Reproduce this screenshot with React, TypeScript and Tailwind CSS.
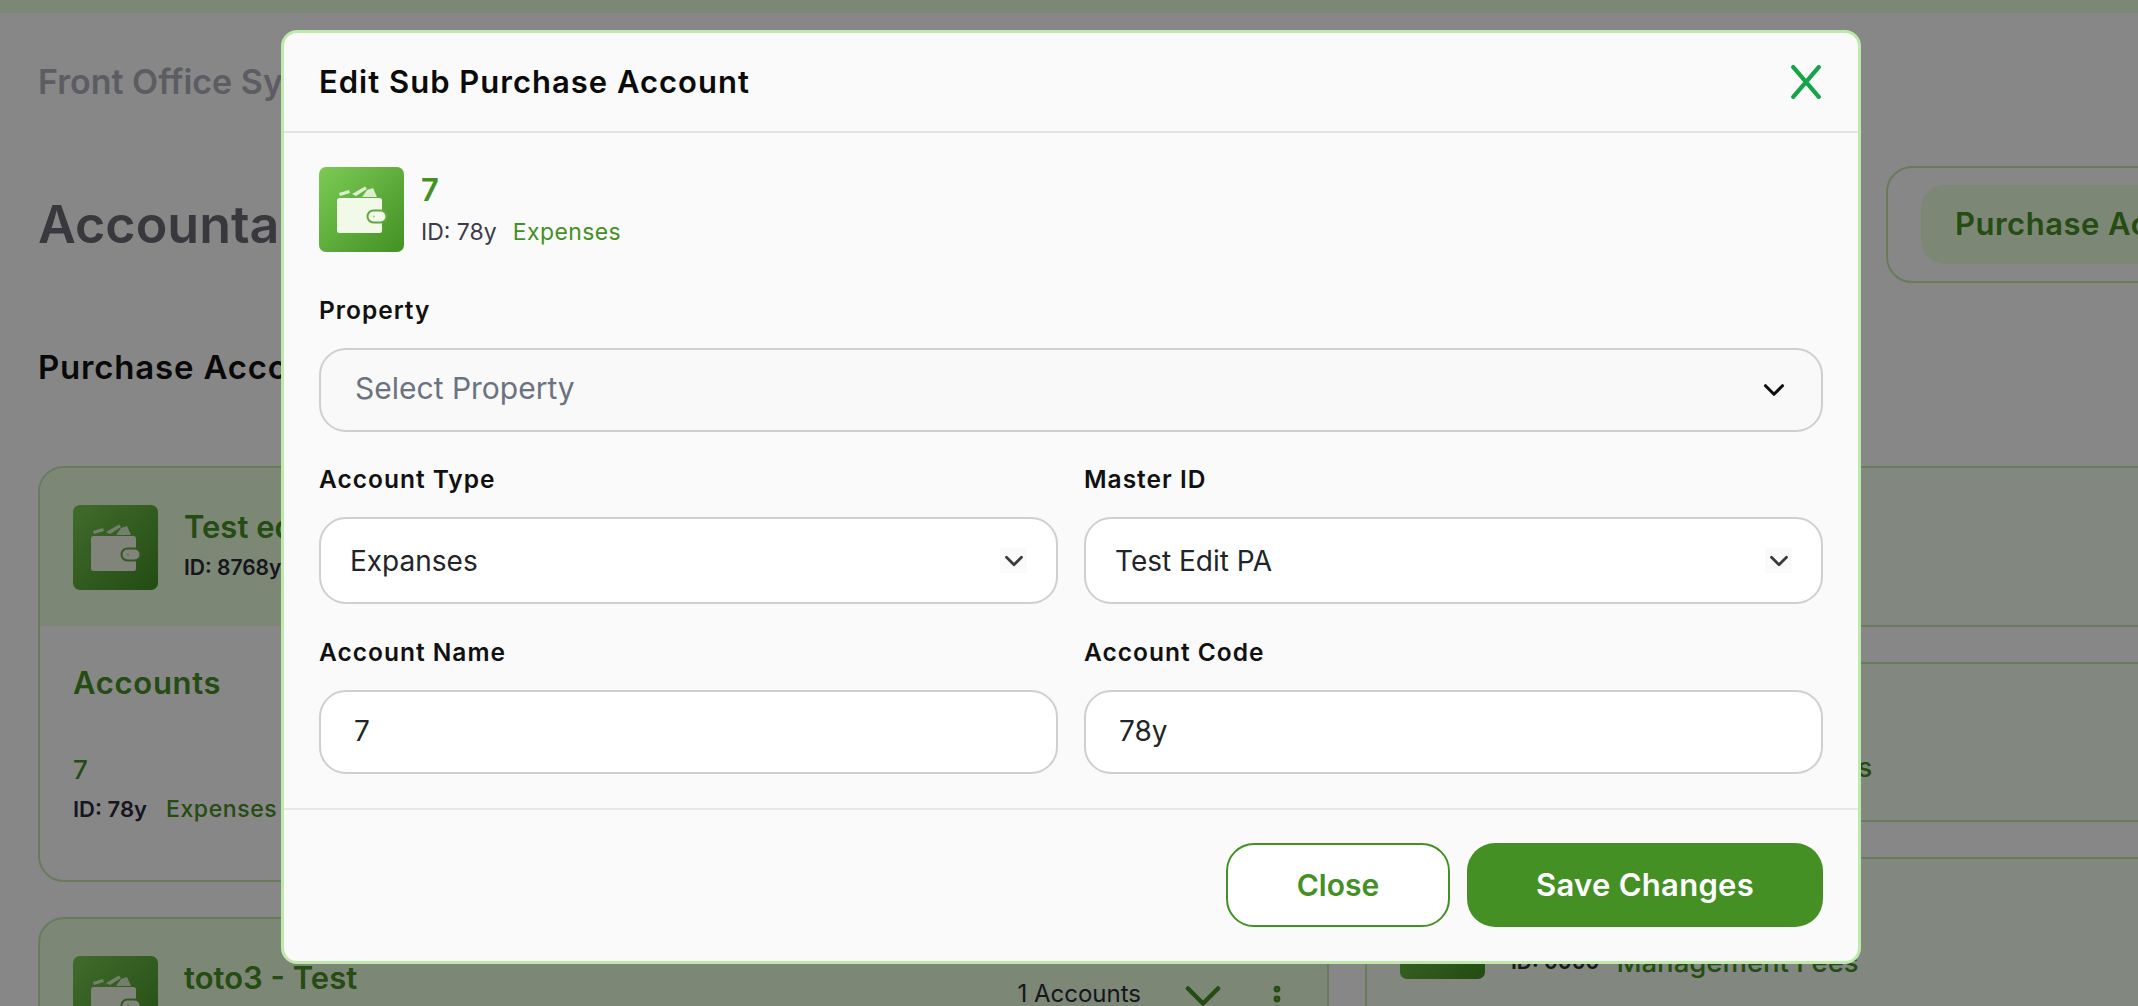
import { ChevronDown, EllipsisVertical } from 'lucide-react';

function WalletIcon() {
  return (
    <svg viewBox="0 0 85 85" className="w-full h-full">
      <path d="M20 26 L30 23 L31 26 L21 29 Z M33 27 L46 19.5 L48 22 L37 29 Z M48 23 L54 21 L58 30 L43 30 Z" fill="currentColor" opacity="0.85" />
      <rect x="18" y="31" width="45" height="35" rx="2.5" fill="currentColor" />
      <rect x="48.5" y="43.5" width="19" height="12" rx="6" fill="currentColor" stroke="#5fa83c" strokeWidth="2" />
      <circle cx="55" cy="49.5" r="1" fill="#a8cf92" />
    </svg>
  );
}

function IconBox() {
  return (
    <div className="w-[85px] h-[85px] shrink-0 rounded-[7px] bg-gradient-to-br from-[#7ccb55] to-[#439023] text-[#f1fae9]">
      <WalletIcon />
    </div>
  );
}

function AccountHead({ name, id, type }: { name: string; id: string; type?: string }) {
  return (
    <div className="flex items-start gap-[26px]">
      <IconBox />
      <div className="pt-[2px]">
        <div className="text-[31px] leading-[40px] font-semibold text-[#449024] whitespace-nowrap">{name}</div>
        <div className={`${type ? 'mt-[12px]' : 'mt-[7px]'} flex items-center gap-[17px] text-[21px] leading-[28px] font-semibold whitespace-nowrap`}>
          <span className="text-[#2b2b3a]">ID: {id}</span>
          {type && <span className="text-[27.5px] font-medium text-[#449024]">{type}</span>}
        </div>
      </div>
    </div>
  );
}

function Label({ children }: { children: string }) {
  return <div className="text-[24.5px] leading-[24px] font-semibold tracking-[1px] text-[#111] mb-[26px] whitespace-nowrap">{children}</div>;
}

function SelectBox({ value }: { value: string }) {
  return (
    <div className="h-[87px] rounded-[27px] border-2 border-[#cfcfcf] bg-white flex items-center justify-between pl-[29px] pr-[29px] text-[28px] text-[#212529]">
      <span>{value}</span>
      <span className="w-[27px] h-[25px] bg-[#fafafa] flex items-center justify-center">
        <ChevronDown className="w-[30px] h-[30px] shrink-0 text-[#3a3a3a]" strokeWidth={2.2} />
      </span>
    </div>
  );
}

function TextBox({ value }: { value: string }) {
  return (
    <div className="h-[84px] rounded-[27px] border-2 border-[#cfcfcf] bg-white flex items-center px-[33px] pb-[2px] text-[28px] text-[#212529]">
      {value}
    </div>
  );
}

export default function App() {
  return (
    <div className="relative h-screen w-full overflow-hidden bg-white font-['Inter','Liberation_Sans',sans-serif]">
      {/* page behind the modal */}
      <div className="h-[13px] bg-[#ecffde]" />
      <div className="px-[38px] w-[2700px]">
        <div className="mt-[50px] text-[34px] leading-[38px] font-semibold text-[#afafbc]">Front Office System</div>
        <div className="mt-[65px] flex items-start justify-between w-[2100px]">
          <div className="mt-[29px] text-[52px] leading-[60px] font-semibold text-[#6d6b75]">Accountant</div>
          <div className="rounded-[26px] border-2 border-[#c4e8b0] h-[117px] w-[400px] mr-[-148px] pl-[33px] pt-[17px]">
            <div className="h-[79px] rounded-[24px] bg-[#ecffde] pl-[34px] flex items-center text-[31px] font-semibold tracking-[0.5px] text-[#449024] whitespace-nowrap">
              Purchase Accounts
            </div>
          </div>
        </div>
        <div className="mt-[62px] text-[33px] leading-[44px] font-semibold tracking-[0.8px] text-[#111]">Purchase Accounts</div>

        <div className="mt-[77px] grid grid-cols-[1291px_1291px] gap-x-[36px] items-start">
          <div className="flex flex-col gap-[35px]">
            <div className="rounded-[26px] border-2 border-[#c4e8b0] overflow-hidden h-[416px]">
              <div className="h-[158px] bg-[#ecffde] pl-[33px] pt-[37px]">
                <AccountHead name="Test edit PA" id="8768y" />
              </div>
              <div className="pl-[33px] pt-[37px]">
                <div className="text-[31px] leading-[40px] font-semibold tracking-[0.7px] text-[#449024]">Accounts</div>
                <div className="mt-[50px] text-[26px] leading-[34px] font-medium text-[#449024]">7</div>
                <div className="mt-[7px] flex items-center gap-[19px] text-[22px] leading-[30px] font-semibold">
                  <span className="text-[#2b2b3a]">ID: 78y</span>
                  <span className="text-[23px] font-medium tracking-[0.6px] text-[#449024]">Expenses</span>
                </div>
              </div>
            </div>
            <div className="rounded-[26px] border-2 border-[#c4e8b0] bg-[#ecffde] h-[200px] pl-[33px] pr-[33px] pt-[37px] flex justify-between">
              <AccountHead name="toto3 - Test" id="1234" />
              <div className="flex items-start">
                <span className="mt-[22px] text-[24px] leading-[32px] text-[#2b2b3a]">1 Accounts</span>
                <ChevronDown className="ml-[32px] mt-[10px] w-[60px] h-[60px] text-[#449024]" strokeWidth={1.8} />
                <EllipsisVertical className="ml-[27px] mt-[26px] w-[34px] h-[34px] text-[#449024]" strokeWidth={2.8} />
              </div>
            </div>
          </div>

          <div className="flex flex-col gap-[35px]">
            <div className="h-[161px] rounded-l-[26px] border-2 border-[#c4e8b0] bg-[#f5fff1]" />
            <div className="h-[160px] rounded-l-[26px] border-2 border-[#c4e8b0] bg-[#f5fff1] pl-[263px] pt-[86px]">
              <div className="text-[27.5px] leading-[34px] font-medium text-[#449024] whitespace-nowrap">Management Fees</div>
            </div>
            <div className="h-[200px] rounded-l-[26px] border-2 border-[#c4e8b0] bg-[#f5fff1] pl-[33px] pt-[35px]">
              <AccountHead name="Fees" id="0000" type="Management Fees" />
            </div>
          </div>
        </div>
      </div>

      {/* overlay */}
      <div className="absolute inset-0 bg-black/[0.47]" />

      {/* modal */}
      <div className="absolute left-[281px] top-[30px] w-[1580px] h-[934px] rounded-[16px] border-[3px] border-[#bde9ab] bg-[#fafafa]">
        <div className="h-[100px] border-b-2 border-[#e4e4e4] flex items-center justify-between pl-[35px] pr-[37px]">
          <div className="text-[31px] font-semibold text-[#0b0b0b] tracking-[1px] whitespace-nowrap">Edit Sub Purchase Account</div>
          <svg viewBox="0 0 28 32" className="w-[30px] h-[34px] text-[#16a34a]" fill="none" stroke="currentColor" strokeWidth="4" strokeLinecap="round">
            <path d="M2 2 L26 30 M26 2 L2 30" />
          </svg>
        </div>

        <div className="px-[35px] pt-[34px]">
          <div className="flex items-start gap-[17px]">
            <IconBox />
            <div className="pt-[4px]">
              <div className="text-[31px] leading-[38px] font-semibold text-[#449024]">7</div>
              <div className="mt-[9px] flex gap-[16px] text-[23px] leading-[28px]">
                <span className="text-[#3a3a4a]">ID: 78y</span>
                <span className="tracking-[0.4px] text-[#449024]">Expenses</span>
              </div>
            </div>
          </div>

          <div className="mt-[46px]">
            <Label>Property</Label>
            <div className="h-[84px] rounded-[27px] border-2 border-[#cfcfcf] bg-[#f9f9f9] flex items-center justify-between pl-[34px] pr-[30px] text-[30px] text-[#6b7280]">
              <span className="pb-[4px]">Select Property</span>
              <ChevronDown className="w-[34px] h-[34px] text-[#111]" strokeWidth={2.2} />
            </div>
          </div>

          <div className="mt-[35px] grid grid-cols-2 gap-x-[26px]">
            <div>
              <Label>Account Type</Label>
              <SelectBox value="Expanses" />
            </div>
            <div>
              <Label>Master ID</Label>
              <SelectBox value="Test Edit PA" />
            </div>
          </div>

          <div className="mt-[36px] grid grid-cols-2 gap-x-[26px]">
            <div>
              <Label>Account Name</Label>
              <TextBox value="7" />
            </div>
            <div>
              <Label>Account Code</Label>
              <TextBox value="78y" />
            </div>
          </div>
        </div>

        <div className="mt-[34px] border-t-2 border-[#e8e8e8] flex justify-end gap-[17px] px-[35px] pt-[33px]">
          <button className="w-[224px] h-[84px] rounded-[28px] border-2 border-[#449024] bg-white text-[30px] font-semibold text-[#449024]">Close</button>
          <button className="w-[356px] h-[84px] rounded-[28px] bg-[#449024] text-[31px] font-semibold tracking-[0.3px] text-white">Save Changes</button>
        </div>
      </div>
    </div>
  );
}
